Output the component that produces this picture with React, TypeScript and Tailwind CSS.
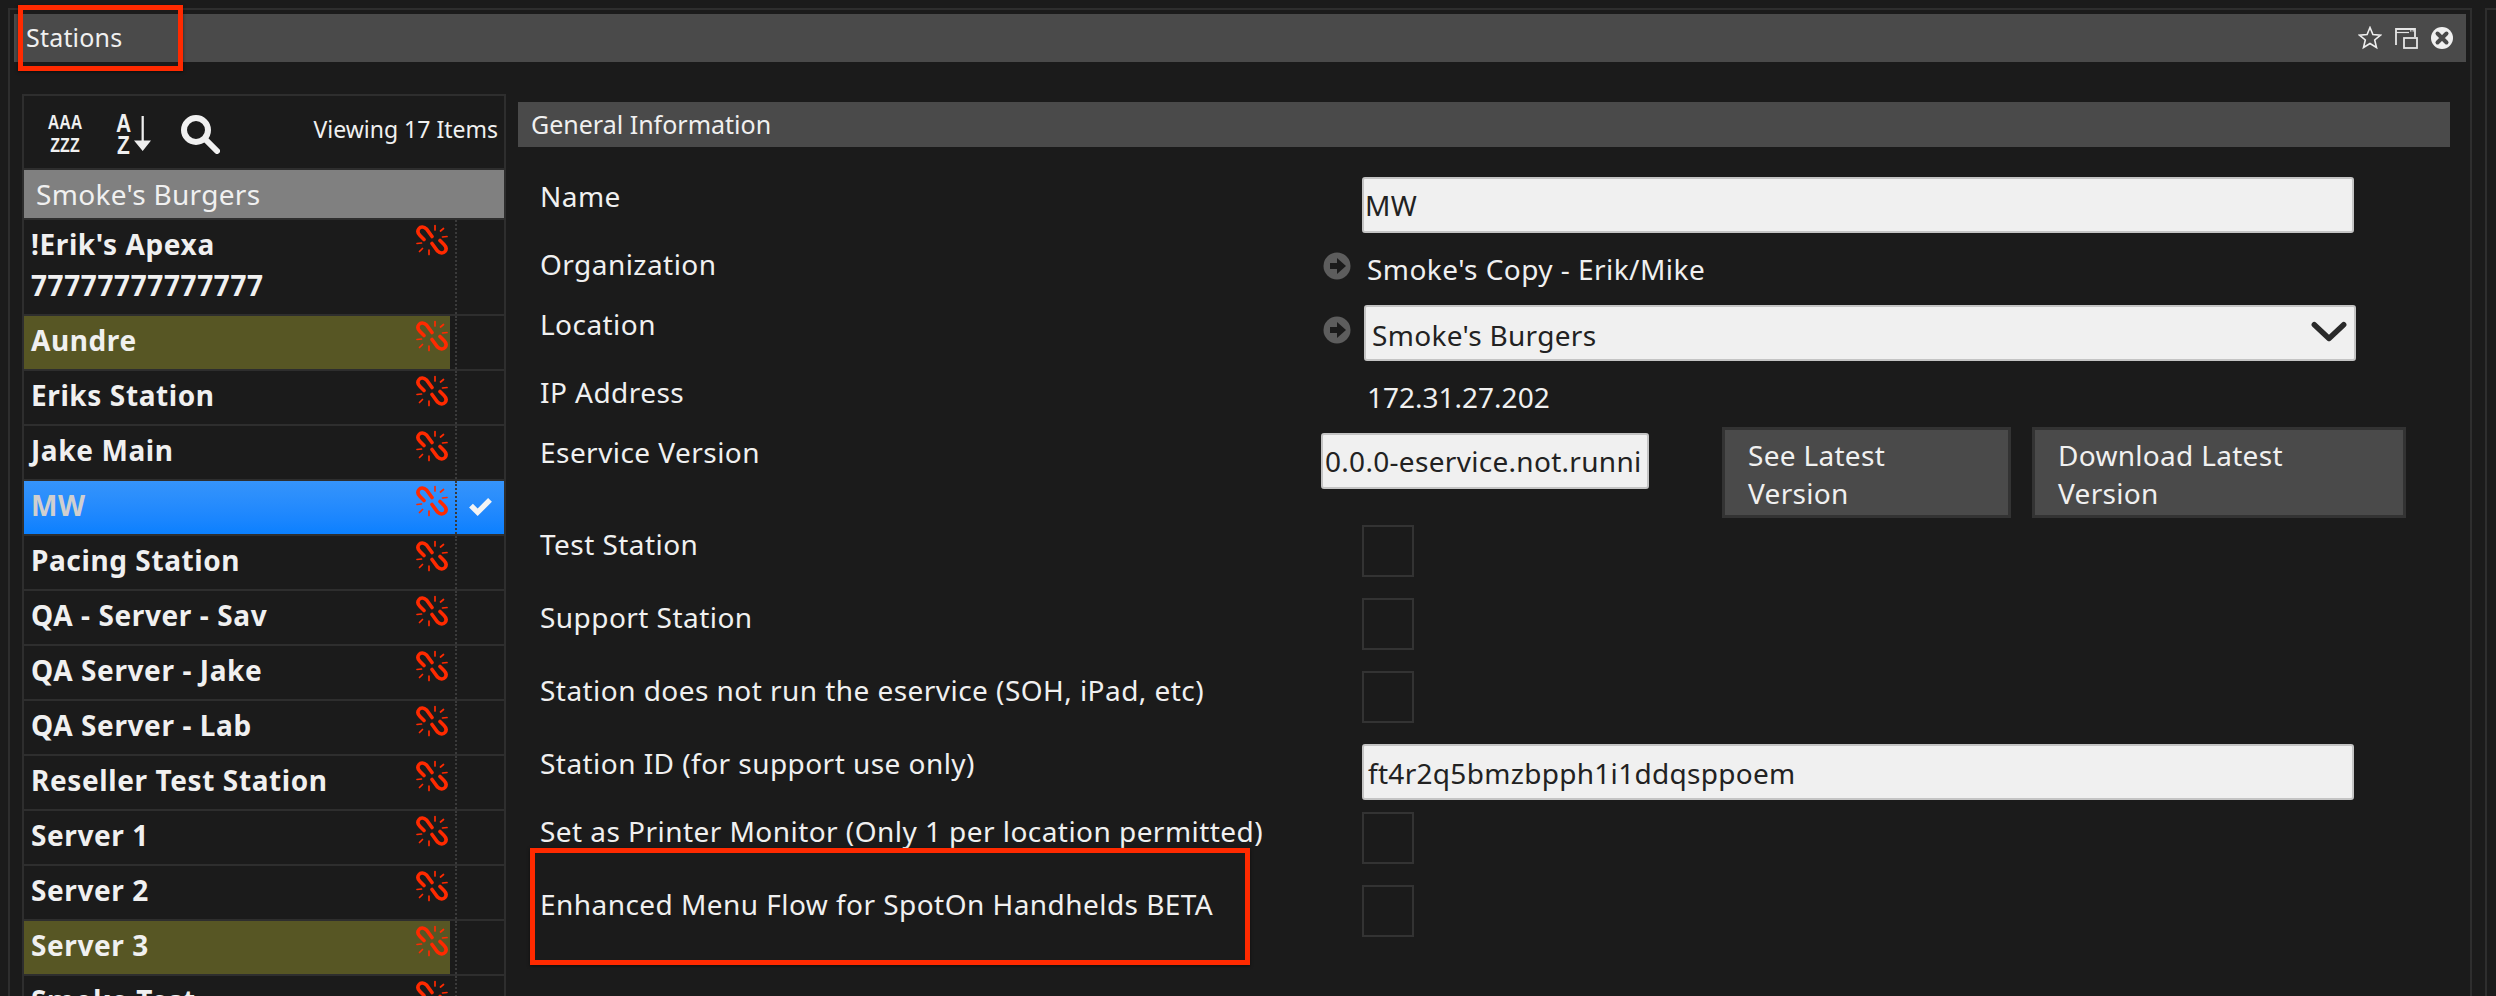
import React from "react";

const LinkOff = () => (
  <svg viewBox="0 0 32 32" className="w-[32px] h-[32px]" fill="none" stroke="#ff2a00" strokeLinecap="round">
    <path strokeWidth="3.6" d="M16 12.5 L10.5 5 C8 2.5 4.5 2.5 3 4.5 C1 7 2 9.5 4 11.5 L8 15.5" />
    <path strokeWidth="3.6" d="M16 19.5 L21.5 27 C24 29.5 27.5 29.5 29 27.5 C31 25 30 22.5 28 20.5 L24 16.5" />
    <path strokeWidth="1.7" d="M19 1.5V6M27.5 4.5L24.5 7M31 12.5L26.5 13M1 19.5L5.5 19M3.5 27.5L6.5 24.5M13 26V30.5" />
  </svg>
);

const Arrow = () => (
  <svg viewBox="0 0 28 28" className="w-[28px] h-[28px] shrink-0">
    <circle cx="14" cy="14" r="13.5" fill="#5d5d5d" />
    <path d="M7 11h7V6l9 8-9 8v-5H7z" fill="#1b1b1b" />
  </svg>
);

const rows: { n: string; olive?: boolean; sel?: boolean; tall?: boolean }[] = [
  { n: "!Erik's Apexa 77777777777777", tall: true },
  { n: "Aundre", olive: true },
  { n: "Eriks Station" },
  { n: "Jake Main" },
  { n: "MW", sel: true },
  { n: "Pacing Station" },
  { n: "QA - Server - Sav" },
  { n: "QA Server - Jake" },
  { n: "QA Server - Lab" },
  { n: "Reseller Test Station" },
  { n: "Server 1" },
  { n: "Server 2" },
  { n: "Server 3", olive: true },
  { n: "Smoke Test" },
];

const Label = ({ children, className = "" }: { children: React.ReactNode; className?: string }) => (
  <div className={"w-[781px] shrink-0 leading-[38px] whitespace-nowrap tracking-[0.45px] " + className}>{children}</div>
);

const Check = () => <div className="ml-[41px] w-[52px] h-[52px] border-2 border-[#333333]" />;

const inputCls =
  "bg-[#f0f0f0] text-[#222222] rounded-[3px] border-2 border-[#c4c4c4] h-[56px] flex items-center whitespace-nowrap overflow-hidden";

export default function App() {
  return (
    <div
      className="h-[996px] overflow-hidden bg-[#1b1b1b] flex pl-[8px] pt-[8px] text-[#f0f0f0] text-[28px] tracking-[0.3px]"
      style={{ fontFamily: '"Noto Sans", "Open Sans", sans-serif' }}
    >
      <div className="w-[2464px] shrink-0 h-[1100px] border-2 border-[#2e2e2e] p-[4px]">
        <div className="h-[48px] bg-[#4a4a4a] flex items-center pl-[12px] pr-[12px] text-[25px] tracking-[0.2px]">
          <span>Stations</span>
          <div className="ml-auto flex items-center gap-[12px]">
            <svg viewBox="0 0 24 24" className="w-[24px] h-[24px]" fill="none" stroke="#eeeeee" strokeWidth="1.6">
              <path d="M12 1.5l2.9 7 7.6.6-5.8 4.9 1.8 7.5-6.5-4-6.5 4 1.8-7.5L1.5 9.100l7.600-.6z" />
            </svg>
            <svg viewBox="0 0 24 24" className="w-[24px] h-[24px]" fill="none" stroke="#e6e6e6" strokeWidth="1.8">
              <path d="M2 19V3h19v8" />
              <path d="M2 6.500h13" strokeWidth="1.2" />
              <path d="M16 4.800h1.500M18.500 4.800h1.500" strokeWidth="1.200" />
              <rect x="10" y="12" width="13" height="10" fill="#4a4a4a" />
            </svg>
            <svg viewBox="0 0 24 24" className="w-[24px] h-[24px]">
              <circle cx="12" cy="12" r="11" fill="#f0f0f0" />
              <path d="M7.500 7.500l9 9M16.500 7.500l-9 9" stroke="#4a4a4a" strokeWidth="4" strokeLinecap="round" />
            </svg>
          </div>
        </div>
        <div className="flex items-start">
          <div className="ml-[8px] mt-[32px] w-[484px] shrink-0 border-2 border-[#2e2e2e]">
            <div className="h-[74px] flex items-center pl-[23px] pr-[6px] border-b-2 border-[#2e2e2e]">
              <div
                className="w-[36px] flex flex-col items-center font-bold text-[16px] leading-[18px] tracking-normal mt-[3px] scale-y-[1.25]"
                style={{ fontFamily: '"Liberation Sans", sans-serif' }}
              >
                <span>AAA</span>
                <span>ZZZ</span>
              </div>
              <div className="ml-[32px] flex items-center">
                <div
                  className="w-[17px] flex flex-col items-center font-bold text-[21px] leading-[19px] tracking-normal mt-[3px] scale-y-[1.2]"
                  style={{ fontFamily: '"Liberation Sans", sans-serif' }}
                >
                  <span>A</span>
                  <span>Z</span>
                </div>
                <svg viewBox="0 0 18 38" className="ml-[2px] w-[17px] h-[38px] mt-[3px]" fill="#eeeeee">
                  <path d="M8 0h2.400v26H18l-8.800 11L0 26h8z" />
                </svg>
              </div>
              <svg viewBox="0 0 40 40" className="ml-[29px] w-[40px] h-[40px] mt-[3px]" fill="none" stroke="#f0f0f0">
                <circle cx="16" cy="16" r="12" strokeWidth="6" />
                <path d="M26 26l11 11" strokeWidth="6" strokeLinecap="round" />
              </svg>
              <span className="ml-auto text-[23px] -mt-[6px] tracking-normal whitespace-nowrap">Viewing 17 Items</span>
            </div>
            <div className="h-[48px] bg-[#808080] flex items-center pl-[12px] text-[28px]">Smoke's Burgers</div>
            <div className="h-[2px] bg-[#2e2e2e]" />
            {rows.map((r) => (
              <div
                key={r.n}
                className={
                  "flex border-b-2 border-[#2e2e2e] " +
                  (r.tall ? "h-[96px] " : "h-[55px] ") +
                  (r.sel ? "bg-gradient-to-b from-[#3594fb] to-[#0a80ff]" : "")
                }
              >
                <div className={"w-[426px] shrink-0 flex " + (r.olive ? "bg-[#575624]" : "")}>
                  <div
                    className={
                      "flex-1 pl-[7px] pt-[4px] font-bold text-[28px] leading-[41px] tracking-[0.6px] " +
                      (r.sel ? "text-[#cfcfcf]" : "text-[#f0f0f0]")
                    }
                  >
                    {r.n}
                  </div>
                  <div className="w-[32px] mt-[4px] mr-[2px] shrink-0">
                    <LinkOff />
                  </div>
                </div>
                <div className="ml-[5px] flex-1 border-l-2 border-dotted border-[#3a3a3a] flex items-center justify-center">
                  {r.sel && (
                    <svg viewBox="0 0 24 20" className="w-[23px] h-[19px]" fill="#f4f4f4">
                      <path d="M0 10l4-4 5 5L20 0l4 4L9 19z" />
                    </svg>
                  )}
                </div>
              </div>
            ))}
          </div>

          <div className="ml-[12px] mt-[40px] w-[1932px] shrink-0">
            <div className="h-[45px] bg-[#4a4a4a] flex items-center pl-[13px] text-[25px] tracking-normal">General Information</div>
            <div className="pl-[22px] pt-[30px]">
              <div className="flex h-[56px]">
                <Label>Name</Label>
                <div className={inputCls + " ml-[41px] w-[992px] pl-[1px]"}>MW</div>
              </div>
              <div className="flex h-[72px]">
                <Label className="mt-[12px]">Organization</Label>
                <div className="flex">
                  <div className="ml-[2px] mt-[19px]"><Arrow /></div>
                  <div className="ml-[16px] mt-[17px] leading-[38px] tracking-[0.45px]">Smoke's Copy - Erik/Mike</div>
                </div>
              </div>
              <div className="flex h-[56px]">
                <Label>Location</Label>
                <div className="flex">
                  <div className="ml-[2px] mt-[11px]"><Arrow /></div>
                  <div className={inputCls + " ml-[13px] w-[992px] pl-[6px] pt-[4px] justify-between pr-[6px]"}>
                    <span>Smoke's Burgers</span>
                    <svg viewBox="0 0 40 24" className="w-[38px] h-[22px] -mt-[7px]" fill="none" stroke="#2a2a2a" strokeWidth="6" strokeLinecap="round" strokeLinejoin="round">
                      <path d="M4 4l16 15L36 4" />
                    </svg>
                  </div>
                </div>
              </div>
              <div className="flex h-[66px]">
                <Label className="mt-[12px]">IP Address</Label>
                <div className="ml-[46px] mt-[17px] leading-[38px] tracking-normal">172.31.27.202</div>
              </div>
              <div className="flex h-[98px]">
                <Label className="mt-[6px]">Eservice Version</Label>
                <div className={inputCls + " mt-[6px] w-[328px] pl-[2px] shrink-0"}>0.0.0-eservice.not.runni</div>
                <div className="ml-[73px] w-[289px] h-[91px] bg-[#4a4a4a] border-[3px] border-[#333333] pl-[23px] pr-[60px] pt-[6px] leading-[38px]">See Latest Version</div>
                <div className="ml-[21px] w-[374px] h-[91px] bg-[#4a4a4a] border-[3px] border-[#333333] pl-[23px] pr-[60px] pt-[6px] leading-[38px]">Download Latest Version</div>
              </div>
              <div className="flex h-[73px]">
                <Label>Test Station</Label>
                <Check />
              </div>
              <div className="flex h-[73px]">
                <Label>Support Station</Label>
                <Check />
              </div>
              <div className="flex h-[73px]">
                <Label>Station does not run the eservice (SOH, iPad, etc)</Label>
                <Check />
              </div>
              <div className="flex h-[68px]">
                <Label>Station ID (for support use only)</Label>
                <div className={inputCls + " ml-[41px] w-[992px] pl-[4px] pt-[2px]"}>ft4r2q5bmzbpph1i1ddqsppoem</div>
              </div>
              <div className="flex h-[73px]">
                <Label>Set as Printer Monitor (Only 1 per location permitted)</Label>
                <Check />
              </div>
              <div className="flex h-[73px]">
                <Label>Enhanced Menu Flow for SpotOn Handhelds BETA</Label>
                <Check />
              </div>
            </div>
          </div>
        </div>
      </div>
      <div className="ml-[13px] flex-1 h-[1100px] border-2 border-[#2e2e2e] border-r-0" />

      <div className="absolute left-[18px] top-[5px] w-[165px] h-[66px] border-[5px] border-[#ff2a00] shadow-[0_1px_3px_rgba(0,0,0,0.5)]" />
      <div className="absolute left-[530px] top-[848px] w-[720px] h-[117px] border-[5px] border-[#ff2a00] shadow-[0_1px_3px_rgba(0,0,0,0.5)]" />
    </div>
  );
}
